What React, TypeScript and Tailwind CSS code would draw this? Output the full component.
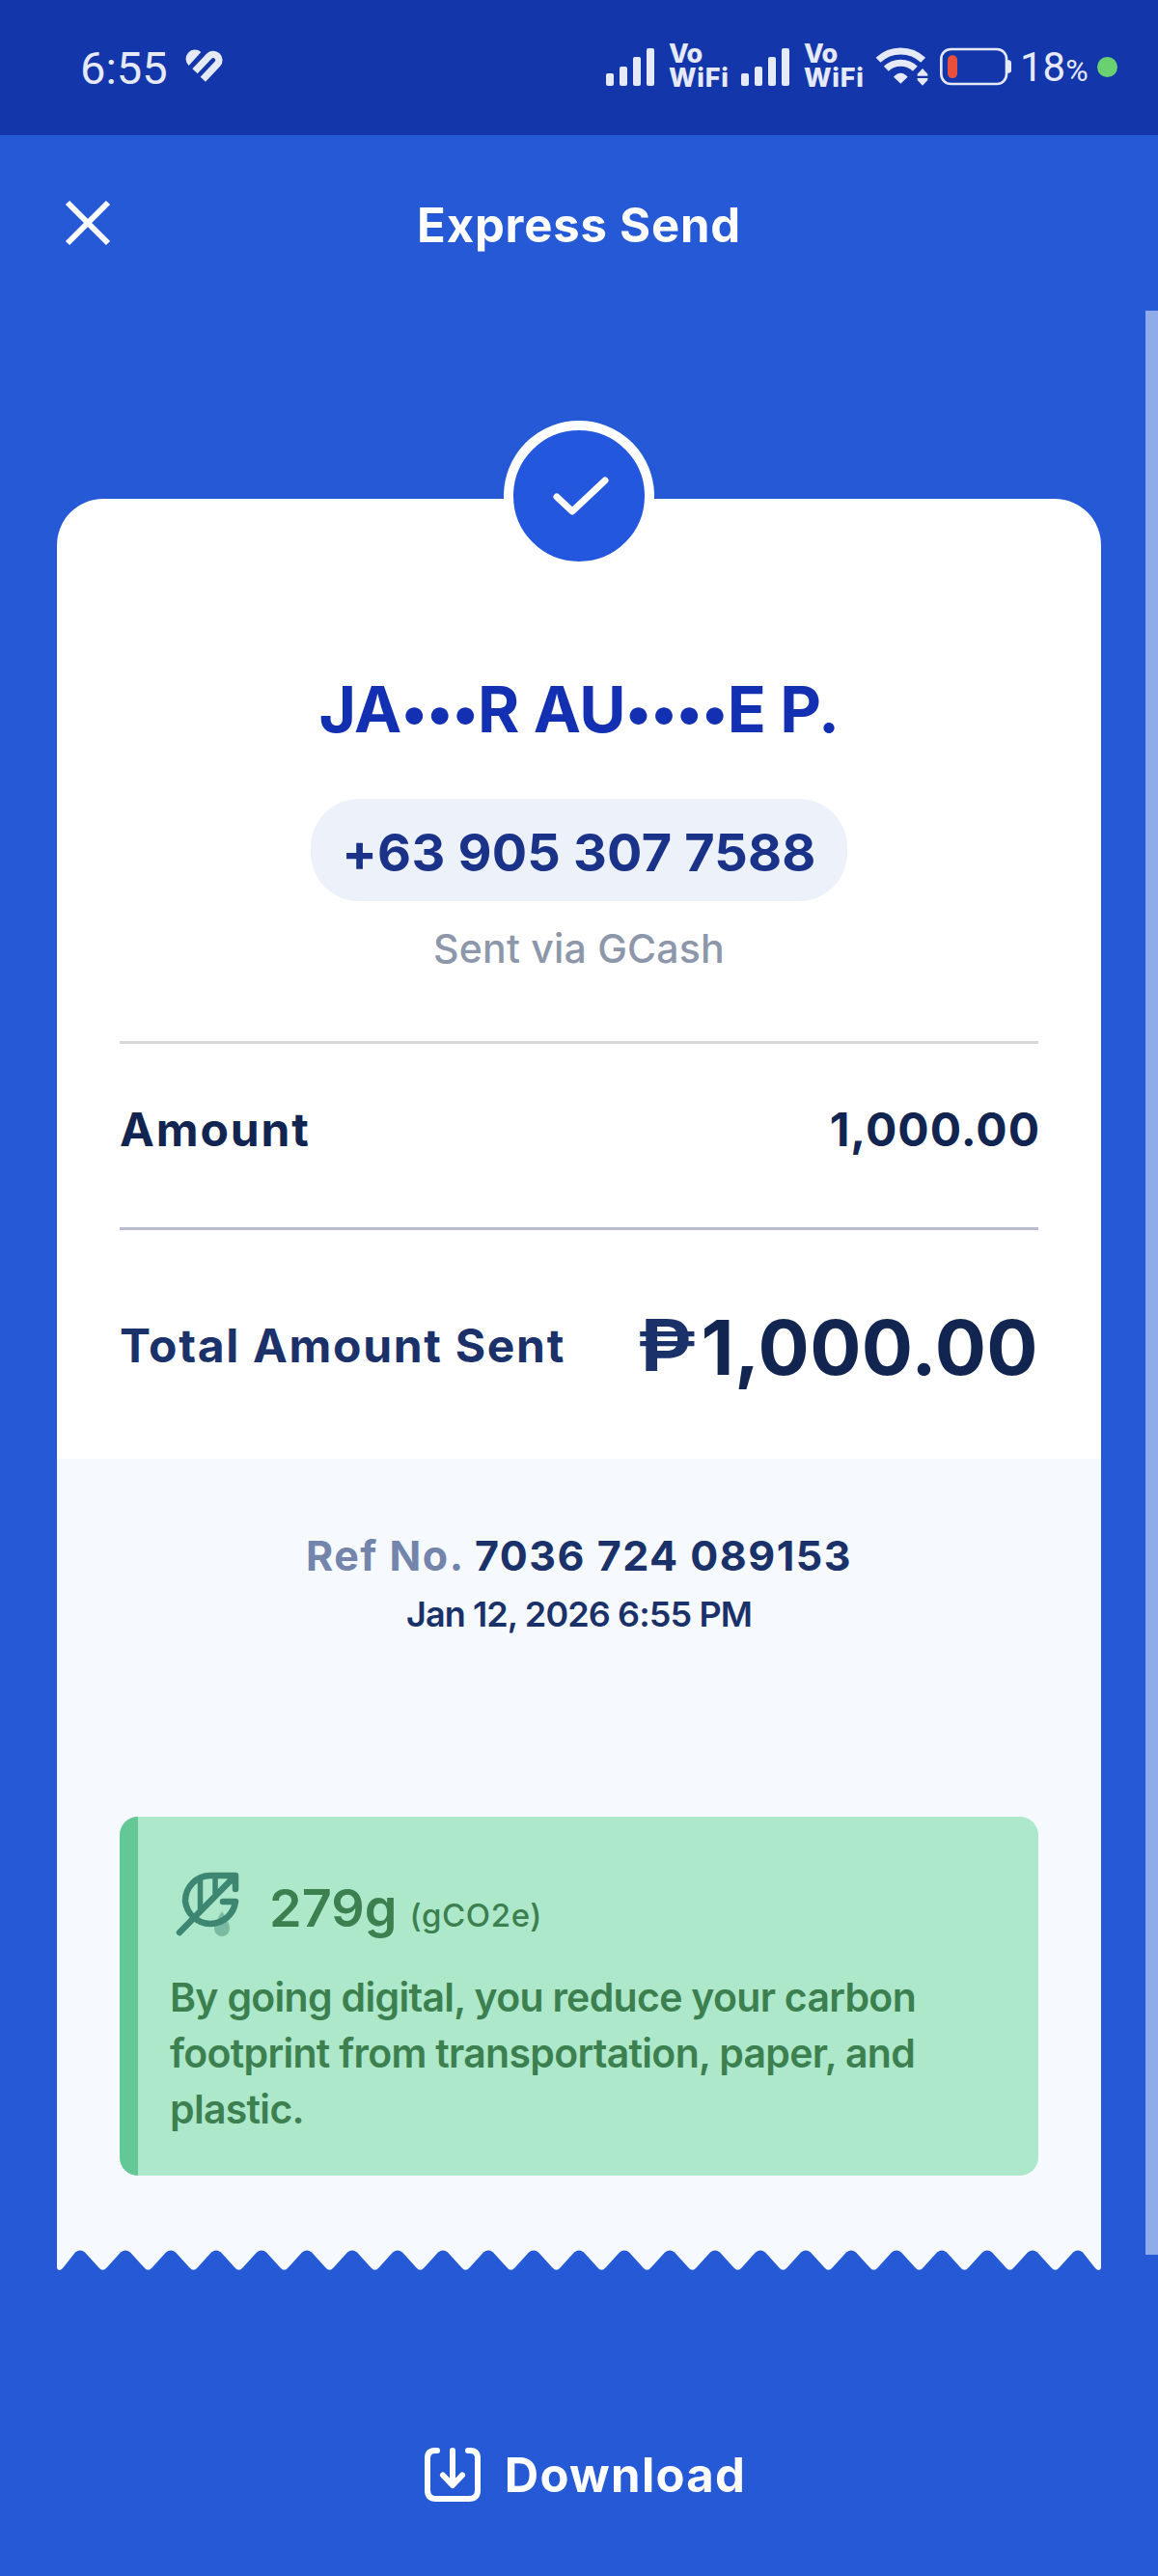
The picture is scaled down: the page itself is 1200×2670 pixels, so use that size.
import React from 'react'

const SignalBars: React.FC = () => (
  <div className="flex h-[39px] w-[50px] items-end justify-between">
    <span className="h-[13px] w-[8px] rounded-[2px] bg-[#e6e9f8]" />
    <span className="h-[20px] w-[8px] rounded-[2px] bg-[#e6e9f8]" />
    <span className="h-[30px] w-[8px] rounded-[2px] bg-[#e6e9f8]" />
    <span className="h-[39px] w-[8px] rounded-[2px] bg-[#e6e9f8]" />
  </div>
)

const VoWifi: React.FC = () => (
  <div className="w-[61px] pb-[2px] text-[27px] font-extrabold leading-[25px] tracking-[0.7px]">
    <p className="tracking-[-0.5px]">Vo</p>
    <p>WiFi</p>
  </div>
)

const HeartIcon: React.FC = () => (
  <svg className="h-[60px] w-[70px]" viewBox="0 0 210 180" fill="none">
    <path d="M47 87A26 26 0 0 1 85 45Z" fill="#e6e9f8" />
    <path d="M66 104L110 58A17.500 17.500 0 0 1 136 82L91 130" stroke="#e6e9f8" strokeWidth="22" />
  </svg>
)

const WifiIcon: React.FC = () => (
  <svg className="h-[42px] w-[55px]" viewBox="21 26 165 126" fill="none">
    <path d="M30 69A101 101 0 0 1 170 69" stroke="#e6e9f8" strokeWidth="21" />
    <path d="M55 96A65 65 0 0 1 145 96" stroke="#e6e9f8" strokeWidth="21" />
    <path d="M100 142L78 121Q100 98 122 121Z" fill="#e6e9f8" />
    <path d="M168 95L184 112V118H152V112ZM168 148L184 131V125H152V131Z" fill="#e6e9f8" />
  </svg>
)

const BatteryIcon: React.FC = () => (
  <svg className="h-[40px] w-[74px]" viewBox="222 25 222 120" fill="none">
    <rect x="226" y="31" width="203" height="108" rx="30" stroke="#e6e9f8" strokeWidth="8" />
    <path d="M432 65H438Q444 67 444 73V98Q444 104 438 105H432Z" fill="#e6e9f8" />
    <rect x="246" y="50" width="30" height="71" rx="14" fill="#e94f3c" />
  </svg>
)

const LeafIcon: React.FC = () => (
  <svg className="h-[70px] w-[70px]" viewBox="20 20 70 70" fill="none">
    <path d="M70 61C66 68 62 73 62 79A8 8 0 0 0 78 79C78 73 74 68 70 61Z" fill="#3c8672" opacity="0.45" />
    <g stroke="#3c8672" strokeWidth="6.500" strokeLinecap="round" strokeLinejoin="round">
      <path d="M84 38V24H58A26 26.500 0 0 0 32 50.500A26.200 26.500 0 0 0 84 51H71" />
      <path d="M26 83L83 25" />
    </g>
    <path d="M47.500 27V59M63 25V43" stroke="#3c8672" strokeWidth="5.500" />
    <path d="M72 24H84V36Z" fill="#3c8672" />
  </svg>
)

const DownloadIcon: React.FC = () => (
  <svg className="h-[60px] w-[58px]" viewBox="0 0 58 60" fill="none" stroke="white" strokeWidth="6" strokeLinecap="round" strokeLinejoin="round">
    <path d="M13 4H11Q3 4 3 12V45Q3 54 12 54H46Q55 54 55 45V12Q55 4 47 4H45" />
    <path d="M29 4V39M19 29.500L29 40L39 29.500" />
  </svg>
)

const Mask: React.FC<{ children: string }> = ({ children }) => (
  <span className="text-[57px] leading-none">{children}</span>
)

// torn paper edge along the bottom of the receipt
const teeth = Array.from({ length: 23 }, (_, i) => 24 + (22 - i) * 47)
const edgePath =
  'M0 0H1082V26Q1080 30 1076 26' +
  teeth
    .map((p, i) => {
      const tip = p - 23.5
      const peak = `L${p + 5} 9.500Q${p} 5.500 ${p - 5} 9.500`
      return i < teeth.length - 1 ? `${peak}L${tip + 4} 25.500Q${tip} 30 ${tip - 4} 25.500` : `${peak}L6 26Q2 30 0 26`
    })
    .join('') +
  'Z'

export default function App() {
  return (
    <div className="relative h-[2670px] w-[1200px] overflow-hidden bg-[#2559d6] font-['Inter',sans-serif] text-white">
      <div className="flex h-[140px] items-center justify-between bg-[#1336aa] pl-[83px] pr-[42px] pb-[2px] text-[#e6e9f8]">
        <div className="flex items-center">
          <span className="w-[97px] pt-[3px] font-['Roboto'] text-[47px] leading-[50px]">6:55</span>
          <HeartIcon />
        </div>
        <div className="flex items-center">
          <SignalBars />
          <div className="ml-[15px] mr-[14px]"><VoWifi /></div>
          <SignalBars />
          <div className="ml-[15px] mr-[13px]"><VoWifi /></div>
          <WifiIcon />
          <div className="ml-[12px]"><BatteryIcon /></div>
          <div className="ml-[9px] mr-[11px] flex w-[69px] items-baseline pt-[5px] font-['Roboto'] leading-[42px]">
            <span className="text-[42px]">18</span>
            <span className="text-[32px]">%</span>
          </div>
          <span className="h-[21px] w-[21px] rounded-full bg-[#6ad173]" />
        </div>
      </div>

      <header className="grid h-[182px] grid-cols-[200px_1fr_200px] items-center">
        <svg className="ml-[67px] h-[48px] w-[48px]" viewBox="0 0 48 48" stroke="white" strokeWidth="6">
          <path d="M3 3L45 45M45 3L3 45" />
        </svg>
        <h1 className="pt-[5px] text-center text-[49px] font-bold leading-[58px] tracking-[0.8px]">Express Send</h1>
      </header>

      <main className="relative h-[2015px] px-[59px] pt-[195px]">
        <div className="absolute right-0 top-0 h-[2015px] w-[13px] bg-[#8fabea]" />
        <div className="absolute left-[522px] top-[114px] flex h-[156px] w-[156px] items-center justify-center rounded-full border-[10px] border-white bg-[#2357dd]">
          <svg className="ml-[3px] h-[46px] w-[62px]" viewBox="0 0 62 46" fill="none" stroke="white" strokeWidth="7" strokeLinecap="round" strokeLinejoin="round">
            <path d="M6 24L22 39L56 7" />
          </svg>
        </div>

        <section className="flex h-[995px] flex-col rounded-t-[48px] bg-white px-[65px] pt-[185px]">
          <h2 className="h-[66px] whitespace-nowrap text-center text-[66px] font-bold leading-[66px] tracking-[-0.6px] text-[#1330b2]">
            JA<Mask>•••</Mask>R AU<Mask>••••</Mask>E P.
          </h2>
          <div className="mt-[60px] flex h-[106px] w-[556px] items-center justify-center self-center rounded-[50px] bg-[#ecf1fa] pt-[5px]">
            <span className="text-[54px] font-bold tracking-[0.2px] text-[#1a3389]">+63 905 307 7588</span>
          </div>
          <p className="mt-[25px] text-center text-[41px] font-medium leading-[48px] tracking-[0.2px] text-[#8c97aa]">Sent via GCash</p>
          <div className="mt-[72px] h-[3px] bg-[#d7d8d9]" />
          <div className="flex h-[190px] items-center justify-between pb-[12px] text-[48px] font-bold text-[#112550]">
            <span className="tracking-[1.9px]">Amount</span>
            <span className="-mr-[2px] tracking-[1px]">1,000.00</span>
          </div>
          <div className="h-[3px] bg-[#b8becb]" />
          <div className="flex h-[237px] items-center justify-between">
            <span className="pt-[2px] text-[48px] font-bold tracking-[1.7px] text-[#1a3169]">Total Amount Sent</span>
            <div className="flex items-center pt-[4px] leading-[80px]">
              <span className="origin-right scale-x-[1.2] pb-[4px] text-[74px] font-semibold text-[#1a3169]">₱</span>
              <span className="ml-[5px] text-[79px] font-bold tracking-[0.4px] text-[#112550]">1,000.00</span>
            </div>
          </div>
        </section>

        <section className="h-[813px] bg-[#f6faff] px-[65px] pt-[76px] text-[#1a3169]">
          <p className="text-center text-[43px] font-bold leading-[48px] tracking-[1.5px]">
            <span className="text-[#7385ab]">Ref No.</span> 7036 724 089153
          </p>
          <p className="mt-[17px] text-center text-[36px] font-[560] leading-[40px] tracking-[-0.9px]">Jan 12, 2026 6:55 PM</p>
          <div className="mt-[190px] h-[372px] overflow-hidden rounded-[19px] bg-[#ade8cb] text-[#3c8050]">
            <div className="h-full border-l-[19px] border-[#63c796] pl-[33px] pt-[57px]">
              <div className="flex h-[70px] items-start pl-[4px]">
                <LeafIcon />
                <p className="ml-[29px] text-[54px] font-semibold leading-[75px]">
                  279g
                  <span className="ml-[13px] text-[33px] font-medium tracking-[0.6px]">(gCO2e)</span>
                </p>
              </div>
              <p className="mt-[31px] whitespace-nowrap text-[41px] font-[560] leading-[58px] tracking-[-0.7px]">
                By going digital, you reduce your carbon
                <br />
                footprint from transportation, paper, and
                <br />
                plastic.
              </p>
            </div>
          </div>
        </section>

        <svg className="block h-[30px] w-[1082px]" viewBox="0 0 1082 30" fill="#f6faff">
          <path d={edgePath} />
        </svg>
      </main>

      <footer className="flex h-[333px] items-center justify-center pb-[105px] pl-[13px]">
        <button className="mt-[229px] flex items-center gap-[25px] text-[49px] font-bold leading-[60px] tracking-[1.3px]">
          <DownloadIcon />
          Download
        </button>
      </footer>
    </div>
  )
}
